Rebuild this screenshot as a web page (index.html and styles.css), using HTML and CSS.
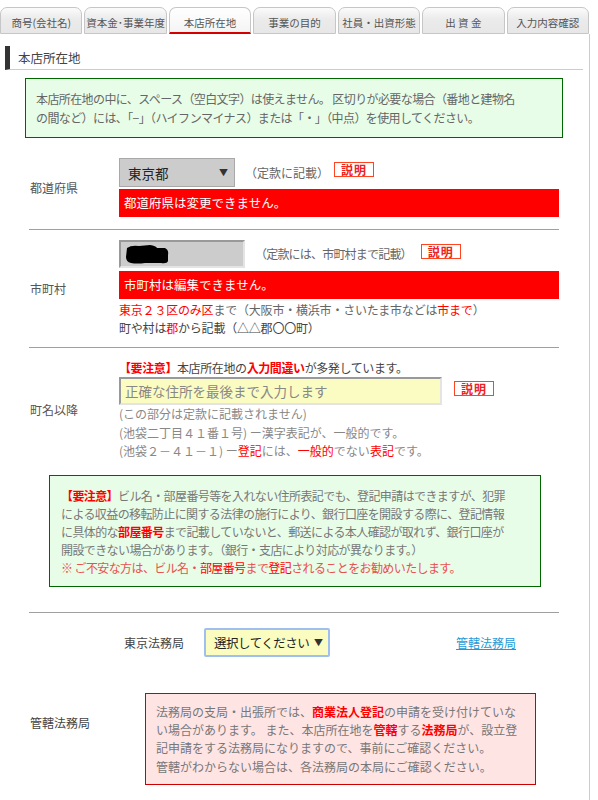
FILE: index.html
```html
<!DOCTYPE html>
<html lang="ja">
<head>
<meta charset="utf-8">
<title>本店所在地</title>
<link rel="stylesheet" href="styles.css">
</head>
<body>
<div class="tabs">
  <div class="tab">商号(会社名)</div>
  <div class="tab">資本金･事業年度</div>
  <div class="tab active">本店所在地</div>
  <div class="tab">事業の目的</div>
  <div class="tab">社員・出資形態</div>
  <div class="tab">出 資 金</div>
  <div class="tab">入力内容確認</div>
</div>
<div class="page">
  <h2 class="heading">本店所在地</h2>
  <div class="info info1">本店所在地の中に、スペース（空白文字）は使えません。 区切りが必要な場合（番地と建物名<br>の間など）には、「−」（ハイフンマイナス）または「・」（中点）を使用してください。</div>

  <div class="form">
    <div class="row r1">
      <div class="label">都道府県</div>
      <div class="field">
        <div class="line">
          <div class="select gray"><span>東京都</span><span class="arrow">▼</span></div>
          <span class="hint h1">（定款に記載）</span>
          <span class="badge b1">説明</span>
        </div>
        <div class="alert">都道府県は変更できません。</div>
      </div>
    </div>

    <div class="row r2">
      <div class="label">市町村</div>
      <div class="field">
        <div class="line">
          <div class="textbox gray"><svg class="redact" width="44" height="19" viewBox="0 0 44 19"><path d="M2 3 Q6 0 14 1 L25 0 Q31 1 32 3 L40 3 Q44 5 43 10 L43 16 Q42 19 36 18 L20 18 Q12 19 6 18 Q1 17 1 12 Z" fill="#000"/></svg></div>
          <span class="hint h2">（定款には、市町村まで記載）</span>
          <span class="badge b2">説明</span>
        </div>
        <div class="alert">市町村は編集できません。</div>
        <div class="notes">
          <div><span class="red">東京２３区のみ区</span>まで（大阪市・横浜市・さいたま市などは<span class="red">市まで</span>）</div>
          <div class="dark">町や村は<span class="red">郡</span>から記載（△△郡〇〇町）</div>
        </div>
      </div>
    </div>

    <div class="section3">
      <div class="row r3">
        <div class="label">町名以降</div>
        <div class="field">
          <div class="warn"><b class="red">【要注意】</b>本店所在地の<b class="red">入力間違い</b>が多発しています。</div>
          <div class="line">
            <div class="textbox yellow">正確な住所を最後まで入力します</div>
            <span class="badge b3">説明</span>
          </div>
          <div class="notes3">
            <div>(この部分は定款に記載されません)</div>
            <div>(池袋二丁目４１番１号) ー漢字表記が、一般的です。</div>
            <div>(池袋２－４１－１) ー<span class="red">登記</span>には、<span class="red">一般的</span>でない<span class="red">表記</span>です。</div>
          </div>
        </div>
      </div>
      <div class="info notice"><b class="red">【要注意】</b>ビル名・部屋番号等を入れない住所表記でも、登記申請はできますが、犯罪<br>による収益の移転防止に関する法律の施行により、銀行口座を開設する際に、登記情報<br>に具体的な<b class="red">部屋番号</b>まで記載していないと、郵送による本人確認が取れず、銀行口座が<br>開設できない場合があります。（銀行・支店により対応が異なります。）<br><span class="salmon">※ ご不安な方は、ビル名・<span class="red">部屋番号</span>まで<span class="red">登記</span>されることをお勧めいたします。</span></div>
    </div>

    <div class="r4">
      <div class="label4">東京法務局</div>
      <div class="select yellowsel"><span class="seltext">選択してください</span><span class="arrow">▼</span></div>
      <a class="link" href="#">管轄法務局</a>
    </div>

    <div class="r5">
      <div class="label5">管轄法務局</div>
      <div class="pink">法務局の支局・出張所では、<b class="red">商業法人登記</b>の申請を受け付けていな<br>い場合があります。 また、本店所在地を<b class="red">管轄</b>する<b class="red">法務局</b>が、設立登<br>記申請をする法務局になりますので、事前にご確認ください。<br>管轄がわからない場合は、各法務局の本局にご確認ください。</div>
    </div>
  </div>
</div>
</body>
</html>
```

FILE: styles.css
```css
* { box-sizing: border-box; }

body {
  margin: 0;
  background: #fff;
  font-family: "Noto Sans CJK JP", "Noto Sans", sans-serif;
  font-size: 12px;
  color: #666;
}

.tabs {
  display: grid;
  grid-template-columns: repeat(7, 1fr);
  column-gap: 2px;
  width: 589px;
  padding-top: 7px;
}

.tab {
  height: 27px;
  border: 1px solid #c6c6c6;
  border-radius: 7px 7px 0 0;
  background: linear-gradient(#fbfbfb, #ebebeb 45%, #e7e7e7);
  font-size: 10.5px;
  line-height: 15px;
  color: #555;
  display: flex;
  align-items: flex-end;
  justify-content: center;
  padding-bottom: 3px;
  white-space: nowrap;
}

.tab.active {
  background: linear-gradient(#fff, #f4f4f4);
  border-bottom: 2px solid #d40000;
  padding-bottom: 2px;
}

.page {
  width: 590px;
  min-height: 766px;
  border-right: 1px solid #ccc;
  padding-top: 12px;
}

.heading {
  margin: 0 6px 0 5px;
  height: 24px;
  border-left: 5px solid #333;
  border-bottom: 1px solid #ccc;
  padding-left: 8px;
  font-size: 12.5px;
  font-weight: normal;
  line-height: 23px;
  color: #444;
}

.info {
  border: 1px solid #060;
  background: #e8fde8;
  padding: 10px;
  line-height: 19px;
  color: #666;
  letter-spacing: -0.6px;
}

.info1 {
  margin: 8px 0 9px 25px;
  width: 538px;
}

.form {
  margin-left: 29px;
  width: 530px;
}

.row {
  display: flex;
  align-items: center;
}

.r1, .r2 { border-bottom: 1px solid #a0a0a0; }
.r1 { padding: 11px 0 12px; }
.r2 { padding: 10px 0 10px; }
.r3 { padding: 11px 0 0; }

.label {
  width: 90px;
  flex: none;
  padding-left: 1px;
  color: #555;
}

.field { flex: 1; }

.line {
  display: flex;
  align-items: flex-start;
}

.select {
  height: 29px;
  display: flex;
  align-items: center;
  justify-content: space-between;
  font-size: 13.5px;
  color: #222;
  white-space: nowrap;
}

.select.gray {
  width: 116px;
  background: #ccc;
  border: 1px solid #a8a8a8;
  padding: 0 6px 0 8px;
}

.arrow {
  font-size: 9px;
  color: #333;
}

.hint {
  color: #666;
  white-space: nowrap;
}

.h1 { line-height: 29px; margin-left: 10px; }
.h2 { line-height: 28px; margin-left: 10px; letter-spacing: -0.8px; }

.badge {
  margin-top: 4px;
  width: 40px;
  height: 15px;
  border: 1px solid #f42;
  background: #fff;
  color: #e22;
  font-weight: bold;
  font-size: 12px;
  line-height: 13px;
  text-align: center;
  letter-spacing: 1px;
}

.b1 { margin-left: 5px; }
.b2 { margin-left: 9px; }
.b3 { margin-left: 12px; }

.alert {
  margin-top: 2px;
  height: 28px;
  line-height: 28px;
  background: #f00;
  color: #fff;
  font-size: 12.5px;
  padding-left: 5px;
}

.r2 .alert { margin-top: 3px; }

.textbox {
  height: 28px;
  border: 2px solid;
  border-color: #999 #e4e4e4 #e4e4e4 #999;
}

.textbox.gray {
  width: 126px;
  background: #ccc;
  padding: 3px 4px;
}

.redact { display: block; }

.textbox.yellow {
  width: 323px;
  background: #fafcc2;
  padding-left: 4px;
  font-size: 13.5px;
  line-height: 24px;
  color: #888;
}

.notes {
  margin-top: 2px;
  line-height: 18px;
  letter-spacing: -0.2px;
}

.dark { color: #444; }

.red { color: #f00; }

b.red { font-weight: bold; }

.salmon { color: #ea5050; }

.warn {
  line-height: 18px;
  color: #444;
  letter-spacing: -0.4px;
}

.notes3 {
  line-height: 18.5px;
  color: #888;
}

.section3 {
  border-bottom: 1px solid #a0a0a0;
  padding-bottom: 25px;
}

.notice {
  margin: 14px 0 0 20px;
  width: 492px;
  padding: 11px 10px 9px 11px;
  line-height: 18px;
  color: #777;
}

.r4 {
  display: flex;
  align-items: center;
  padding: 15px 0 0 95px;
}

.label4 {
  width: 80px;
  flex: none;
  color: #444;
}

.select.yellowsel {
  width: 126px;
  flex: none;
  background: #fafcc0;
  border: 2px solid #9fbff0;
  border-radius: 2px;
  padding: 0 5px 0 8px;
}

.seltext {
  font-size: 12.5px;
  letter-spacing: -0.5px;
}

.link {
  margin-left: 126px;
  color: #1e9bd7;
  text-decoration: underline;
}

.r5 {
  display: flex;
  align-items: flex-start;
  margin-top: 36px;
}

.label5 {
  width: 116px;
  flex: none;
  padding-left: 1px;
  margin-top: 21px;
  line-height: 18px;
  color: #444;
}

.pink {
  width: 391px;
  border: 1px solid #c00;
  background: #ffe4e4;
  padding: 9px 10px 8px;
  line-height: 18.4px;
  color: #777;
}
```
